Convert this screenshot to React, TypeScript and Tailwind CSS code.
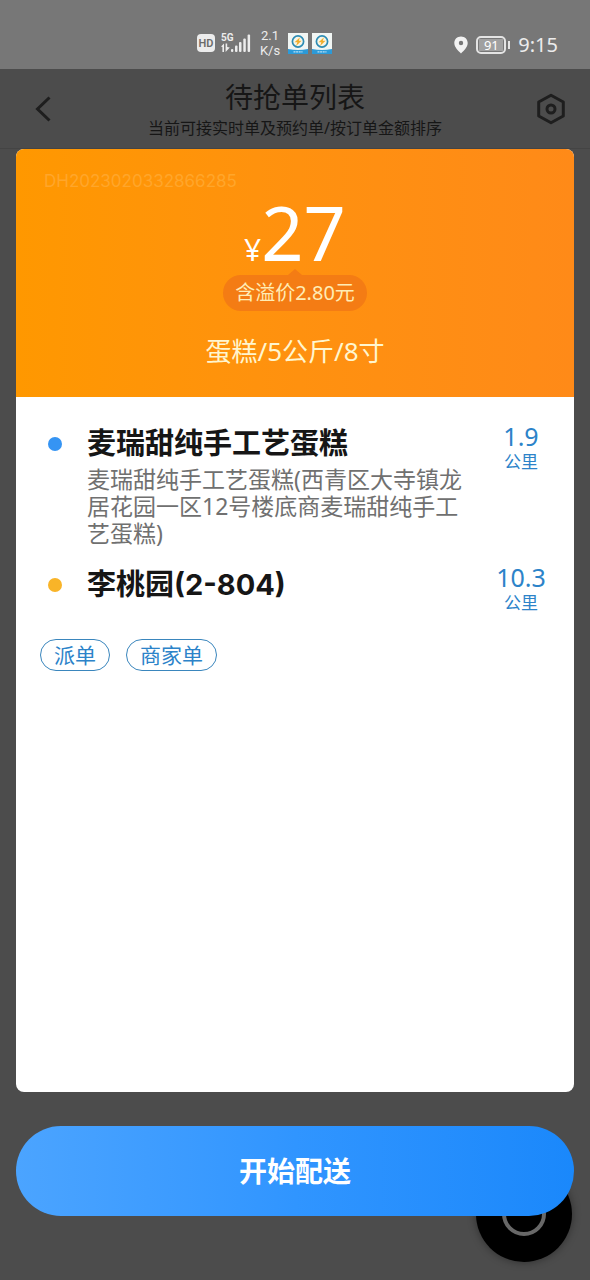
import React from "react";

type Stop = {
  name: string;
  address?: string;
  distance: string;
  dotClass: string;
};

const stops: Stop[] = [
  {
    name: "麦瑞甜纯手工艺蛋糕",
    address: "麦瑞甜纯手工艺蛋糕(西青区大寺镇龙居花园一区12号楼底商麦瑞甜纯手工艺蛋糕)",
    distance: "1.9",
    dotClass: "bg-[#3594f3]",
  },
  { name: "李桃园(2-804)", distance: "10.3", dotClass: "bg-[#f9b428]" },
];

const tags = ["派单", "商家单"];

function SignalIcon() {
  return (
    <svg width="31" height="22" viewBox="0 0 31 22" fill="#ececec" aria-hidden="true">
      <text x="0" y="9" fontSize="10" fontWeight="700" fontFamily="Roboto, sans-serif">5G</text>
      <path d="M0 14.500 L3 11.500 V20 H1.400 V15 Z M4.600 11.500 H6.200 V15 L8.800 15.500 L4.600 20 Z" />
      <rect x="10" y="17" width="2.300" height="3" rx="1" />
      <rect x="14" y="13.500" width="2.500" height="6.500" rx="1" />
      <rect x="18" y="10" width="2.500" height="10" rx="1" />
      <rect x="22.300" y="6.500" width="2.500" height="13.500" rx="1" />
      <rect x="26.600" y="2.500" width="2.500" height="17.500" rx="1" />
    </svg>
  );
}

function AppBadge() {
  return (
    <svg width="20" height="21" viewBox="0 0 20 21" aria-hidden="true">
      <rect width="20" height="21" fill="#f1f6f4" />
      <path d="M0 16 Q10 18 20 16 V21 H0 Z" fill="#2c9ad8" />
      <path d="M5.500 18.800 H14.500" stroke="#b9e0f5" strokeWidth="1.300" strokeDasharray="2 .6" />
      <circle cx="10" cy="8.500" r="5.600" fill="#f6f6e8" stroke="#2d8cb4" strokeWidth="1.700" />
      <path d="M12 4.200 L6.600 9.200 H9.400 L8 13 L13.600 7.800 H10.800 Z" fill="#f2ae2b" />
    </svg>
  );
}

function StatusBar() {
  return (
    <div className="flex h-[69px] items-end justify-between bg-[#777777] pr-8 pb-3 pl-[197px] text-[#ececec]">
      <div className="flex h-7 items-center">
        <span className="flex h-[18px] w-[18px] items-center justify-center rounded-sm bg-[#ececec] font-[Roboto,sans-serif] text-[11px] leading-none font-semibold text-[#6b6b6b]">
          HD
        </span>
        <span className="ml-1.5">
          <SignalIcon />
        </span>
        <span className="ml-1.5 w-6 text-center font-[Roboto,sans-serif] text-[13px] leading-[15px]">
          2.1
          <br />
          K/s
        </span>
        <span className="ml-1.5 flex gap-1">
          <AppBadge />
          <AppBadge />
        </span>
      </div>
      <div className="flex h-6 items-center">
        <svg width="14" height="18" viewBox="0 0 14 18" aria-hidden="true">
          <path
            fillRule="evenodd"
            fill="#f2f2f2"
            d="M7 .5 C3.200 .5 .3 3.300 .3 7 C.3 11 4 14.500 7 17.500 C10 14.500 13.700 11 13.700 7 C13.700 3.300 10.800 .5 7 .5 Z M7 4.800 a2.200 2.200 0 1 1 0 4.400 a2.200 2.200 0 1 1 0 -4.400 Z"
          />
        </svg>
        <span className="ml-2 flex h-[18px] w-[30px] items-center justify-center rounded-[5px] border-2 border-[#e4e4e4] p-px">
          <span className="flex h-full w-full items-center justify-center bg-[#a0a0a0] text-[13px] leading-none text-white">
            91
          </span>
        </span>
        <span className="ml-0.5 h-2 w-0.5 bg-[#e4e4e4]" />
        <span className="ml-2 text-[20px] leading-6">9:15</span>
      </div>
    </div>
  );
}

function PageHeader() {
  return (
    <header className="flex h-20 items-center justify-between border-b border-[#444444] px-6 text-[#161616]">
      <button type="button" aria-label="返回" className="flex w-10 pl-2">
        <svg width="22" height="28" viewBox="0 0 22 28" fill="none" stroke="#1e1e1e" strokeWidth="3" aria-hidden="true">
          <path d="M17.500 2.500 L5.500 14 L17.500 25.500" />
        </svg>
      </button>
      <div className="text-center">
        <h1 className="text-[28px] leading-[34px]">待抢单列表</h1>
        <p className="mt-1 text-[16px] leading-5">当前可接实时单及预约单/按订单金额排序</p>
      </div>
      <button type="button" aria-label="设置" className="flex w-10 justify-end">
        <svg width="30" height="32" viewBox="0 0 30 32" fill="none" stroke="#1e1e1e" strokeWidth="3" strokeLinejoin="round" aria-hidden="true">
          <path d="M15 2.300 L27.300 9 V23 L15 29.700 L2.700 23 V9 Z" />
          <circle cx="15" cy="16" r="4" />
        </svg>
      </button>
    </header>
  );
}

function StopRow({ stop }: { stop: Stop }) {
  return (
    <li className="flex">
      <span className={`mt-[15px] mr-[25px] h-3.5 w-3.5 shrink-0 rounded-full ${stop.dotClass}`} />
      <div className="min-w-0 flex-1">
        <h2 className="font-[Inter,'Noto_Sans_CJK_SC',sans-serif] text-[29px] leading-11 font-bold text-[#161616]">
          {stop.name}
        </h2>
        {stop.address && <p className="text-[23px] leading-[27px] text-[#707070]">{stop.address}</p>}
      </div>
      <div className="ml-6 w-16 shrink-0 text-center text-[#2c83c9]">
        <div className="text-[25px] leading-7">{stop.distance}</div>
        <div className="text-[17px] leading-6">公里</div>
      </div>
    </li>
  );
}

export default function App() {
  return (
    <div className="relative isolate flex min-h-screen flex-col bg-[#4c4c4c] font-['Noto_Sans','Noto_Sans_CJK_SC',sans-serif]">
      <StatusBar />
      <PageHeader />

      <button
        type="button"
        aria-label="刷新"
        className="absolute right-[18px] bottom-[18px] -z-10 flex h-24 w-24 items-center justify-center rounded-full bg-black shadow-[0_0_8px_rgba(0,0,0,0.4)]"
      >
        <svg width="44" height="44" viewBox="0 0 44 44" fill="none" stroke="#686868" strokeWidth="4" aria-hidden="true">
          <circle cx="22" cy="22" r="20" />
        </svg>
      </button>

      <main className="flex flex-1 flex-col px-4 pb-16">
        <article className="flex flex-1 flex-col overflow-hidden rounded-lg bg-white">
          <section className="flex h-[248px] flex-col items-center bg-linear-to-r from-[#ff9800] to-[#ff8a18] text-white">
            <p className="self-start pt-5 pl-7 font-[Inter,sans-serif] text-[17px] leading-6 text-[#ffa62b]">
              DH2023020332866285
            </p>
            <p className="mt-[5px] flex h-[70px] items-baseline">
              <span className="text-[30px] leading-8">¥</span>
              <span className="text-[74px] leading-[70px]">27</span>
            </p>
            <div className="relative mt-[7px] rounded-full bg-[#f47c14] px-3 text-[20px] leading-9 text-[#ffecb4]">
              <span className="absolute -top-1.5 left-1/2 h-0 w-0 -translate-x-1/2 border-x-[7px] border-b-[6px] border-x-transparent border-b-[#f47c14]" />
              含溢价2.80元
            </div>
            <p className="mt-5 text-[26px] leading-10 text-[#fff6cf]">蛋糕/5公斤/8寸</p>
          </section>

          <ul className="flex flex-col gap-4 pt-[25px] pr-[21px] pl-8">
            {stops.map((stop) => (
              <StopRow key={stop.name} stop={stop} />
            ))}
          </ul>

          <div className="flex gap-4 px-6 pt-6">
            {tags.map((tag) => (
              <span key={tag} className="rounded-full border border-[#3a86bd] px-[13px] text-[21px] leading-[30px] text-[#2c83c9]">
                {tag}
              </span>
            ))}
          </div>
        </article>

        <button
          type="button"
          className="mt-[34px] h-[90px] rounded-full bg-linear-to-r from-[#4ba4ff] via-[#3095ff] to-[#1a88fb] text-[28px] font-bold text-white"
        >
          开始配送
        </button>
      </main>
    </div>
  );
}
